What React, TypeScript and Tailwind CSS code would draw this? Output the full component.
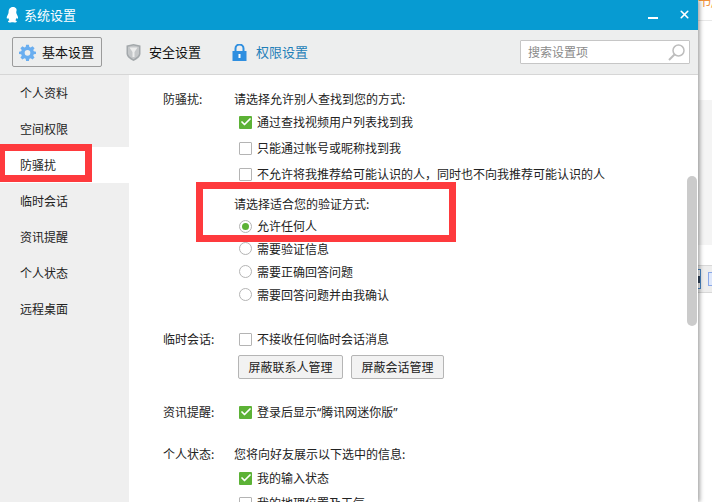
import { Check, X } from 'lucide-react'

const navItems = ['个人资料', '空间权限', '防骚扰', '临时会话', '资讯提醒', '个人状态', '远程桌面']

function Checkbox({ checked }: { checked?: boolean }) {
  if (checked) {
    return (
      <span className="flex h-[13px] w-[13px] shrink-0 items-center justify-center rounded-[1px] bg-[#5cb236]">
        <Check size={12} strokeWidth={3.5} className="text-white" />
      </span>
    )
  }
  return <span className="h-[13px] w-[13px] shrink-0 rounded-[1px] border border-[#b4b4b4] bg-white" />
}

function CheckRow({ checked, label, className }: { checked?: boolean; label: React.ReactNode; className?: string }) {
  return (
    <div className={`flex h-[18px] items-center gap-[5px] pl-[5px] ${className ?? ''}`}>
      <Checkbox checked={checked} />
      <span>{label}</span>
    </div>
  )
}

function RadioRow({ checked, label, className }: { checked?: boolean; label: string; className: string }) {
  return (
    <div className={`flex items-center gap-[5px] pl-[5px] ${className}`}>
      <span className="flex h-[13px] w-[13px] shrink-0 items-center justify-center rounded-full border border-[#b4b4b4] bg-white">
        {checked && <span className="h-[7px] w-[7px] rounded-full bg-[#5cb236]" />}
      </span>
      <span>{label}</span>
    </div>
  )
}

function SectionLabel({ children }: { children: string }) {
  return <div className="w-[71px] shrink-0">{children}</div>
}

function PushButton({ children, width }: { children: string; width: string }) {
  return (
    <button className={`h-[24px] rounded-[2px] border border-[#b5b5b5] bg-[#f2f2f2] text-center text-[12px] ${width}`}>
      {children}
    </button>
  )
}

export default function App() {
  return (
    <div className="relative flex h-[502px] w-[712px] overflow-hidden bg-white font-[family-name:'Noto_Sans_CJK_SC',sans-serif] text-[12px] leading-[18px] text-[#222]">
      <div className="z-10 flex h-full w-[698px] shrink-0 flex-col bg-white shadow-[2px_0_4px_rgba(0,0,0,0.35)]">
        {/* Title bar */}
        <div className="flex h-[30px] shrink-0 items-center bg-[#079bd2] pl-[6px] text-white">
          <svg width="14" height="17" viewBox="0 0 14 17" fill="white">
            <path d="M7 0C3.900 0 2.600 2.400 2.600 5c0 1-.2 1.500-.7 2.400C1 9 .4 10.600.9 11.600c.3.400.9-.2 1.200-.8.2 1 .7 1.800 1.400 2.400-1 .4-1.700.9-1.500 1.600.3.800 2.200.9 3.600.5.3 0 .5-.1.800-.1s.6.100.9.100c1.300.4 3.200.3 3.500-.5.200-.7-.5-1.200-1.500-1.600.7-.6 1.200-1.400 1.400-2.400.3.600.9 1.200 1.200.8.500-1-.1-2.600-1-4.200-.5-.9-.7-1.400-.7-2.400C11.400 2.400 10.100 0 7 0z" />
          </svg>
          <span className="ml-[4px] text-[13px]">系统设置</span>
          <div className="ml-auto flex items-center">
            <span className="mr-[20px] mt-[6px] h-[2px] w-[10px] bg-white" />
            <X size={13} strokeWidth={3} className="mb-[2px] mr-[7px] text-white" />
          </div>
        </div>

        {/* Tab bar */}
        <div className="flex h-[45px] shrink-0 items-center border-b border-[#d6d6d6] bg-[#edeeee] pl-[12px] pr-[8px]">
          <div className="flex h-[30px] w-[90px] items-center rounded-[2px] border border-[#9b9b9b] pl-[6px]">
            <svg width="17" height="17" viewBox="0 0 24 24" fill="#6aaef0" fillRule="evenodd">
              <path d="M10 1h4l.6 3.100 1.900.8L19.100 3 22 5.900l-1.900 2.600.8 1.900L24 11v3l-3.100.6-.8 1.900 1.900 2.600L19.100 22l-2.600-1.900-1.900.8L14 24h-4l-.6-3.100-1.900-.8L4.900 22 2 19.100l1.900-2.600-.8-1.900L0 14v-3l3.100-.6.8-1.900L2 5.900 4.900 3l2.600 1.900 1.900-.8zM12 8.500a4 4 0 1 0 0 8 4 4 0 0 0 0-8z" />
            </svg>
            <span className="ml-[6px] text-[13px] text-[#111]">基本设置</span>
          </div>
          <div className="ml-[24px] flex items-center">
            <svg width="15" height="17" viewBox="0 0 15 17">
              <path d="M0.500 1.500 7.500 0l7 1.500v8c0 3-3 5.500-7 7.500-4-2-7-4.500-7-7.500z" fill="#a3a8ab" />
              <path d="M2 2.700 7.500 1.500l5.500 1.200v6.600c0 2.300-2.300 4.200-5.500 5.900C4.300 13.500 2 11.600 2 9.300z" fill="#c4c7c9" />
              <path d="M3.500 3.500h8L8.500 8v5h-2V8z" fill="#eceded" />
            </svg>
            <span className="ml-[8px] text-[13px] text-[#111]">安全设置</span>
          </div>
          <div className="ml-[31px] flex items-center">
            <svg width="15" height="17" viewBox="0 0 15 17">
              <path d="M3.500 8V4.500a4 4 0 0 1 8 0V8" fill="none" stroke="#2f8fe0" strokeWidth="2" />
              <path d="M0.500 7h14v10h-14z" fill="#2f8fe0" />
              <path d="M6.500 10h2v4h-2z" fill="white" />
            </svg>
            <span className="ml-[9px] text-[13px] text-[#1f7fb8]">权限设置</span>
          </div>
          <div className="ml-auto flex h-[24px] w-[170px] items-center rounded-[1px] border border-[#c6c6c6] bg-white pl-[7px] pr-[4px] text-[#8a8a8a]">
            <span className="text-[12px]">搜索设置项</span>
            <svg width="17" height="17" viewBox="0 0 17 17" fill="none" stroke="#bdbdbd" className="ml-auto">
              <circle cx="10.500" cy="6.500" r="5.500" strokeWidth="1.500" />
              <path d="M6.500 10.500 1 16" strokeWidth="2" />
            </svg>
          </div>
        </div>

        <div className="relative flex min-h-0 flex-1">
          {/* Left nav */}
          <div className="w-[129px] shrink-0 bg-[#efefef]">
            {navItems.map((item, i) => (
              <div key={item} className={`flex h-[36px] items-center pl-[20px] ${i === 2 ? 'bg-white' : ''}`}>
                {item}
              </div>
            ))}
          </div>

          {/* Content */}
          <div className="flex min-w-0 flex-1 flex-col pl-[34px] pt-[15px]">
            <div className="flex">
              <SectionLabel>防骚扰:</SectionLabel>
              <div>
                <div className="h-[18px]">请选择允许别人查找到您的方式:</div>
                <CheckRow checked label="通过查找视频用户列表找到我" className="mt-[5px]" />
                <CheckRow label="只能通过帐号或昵称找到我" className="mt-[8px]" />
                <CheckRow label="不允许将我推荐给可能认识的人，同时也不向我推荐可能认识的人" className="mt-[8px]" />
                <div className="mt-[12px] h-[18px]">请选择适合您的验证方式:</div>
                <div className="mt-[2px]">
                  <RadioRow checked label="允许任何人" className="h-[22px]" />
                  <RadioRow label="需要验证信息" className="h-[23px]" />
                  <RadioRow label="需要正确回答问题" className="h-[23px]" />
                  <RadioRow label="需要回答问题并由我确认" className="h-[23px]" />
                </div>
              </div>
            </div>

            <div className="mt-[24px] flex">
              <SectionLabel>临时会话:</SectionLabel>
              <div>
                <CheckRow label="不接收任何临时会话消息" />
                <div className="mt-[7px] flex gap-[8px] pl-[4px]">
                  <PushButton width="w-[105px]">屏蔽联系人管理</PushButton>
                  <PushButton width="w-[93px]">屏蔽会话管理</PushButton>
                </div>
              </div>
            </div>

            <div className="mt-[24px] flex">
              <SectionLabel>资讯提醒:</SectionLabel>
              <CheckRow
                checked
                label={
                  <>
                    登录后显示<span className="font-['Noto_Sans']">“</span>腾讯网迷你版<span className="font-['Noto_Sans']">”</span>
                  </>
                }
              />
            </div>

            <div className="mt-[24px] flex">
              <SectionLabel>个人状态:</SectionLabel>
              <div>
                <div className="h-[18px]">您将向好友展示以下选中的信息:</div>
                <CheckRow checked label="我的输入状态" className="mt-[6px]" />
                <CheckRow label="我的地理位置及天气" className="mt-[7px]" />
              </div>
            </div>
          </div>

          {/* Scrollbar thumb */}
          <div className="absolute right-[1px] top-[101px] h-[150px] w-[10px] rounded-[5px] bg-[#cbcbcb]" />

          {/* Red annotations */}
          <div className="absolute left-[-2px] top-[69px] h-[38px] w-[94px] border-[7px] border-[#fe3a3d]" />
          <div className="absolute left-[196px] top-[107px] h-[60px] w-[260px] border-[7px] border-[#fe3a3d]" />
        </div>
      </div>

      {/* Desktop behind the window */}
      <div className="relative flex min-w-0 flex-1 flex-col overflow-hidden">
        <span className="absolute left-[0px] top-[-9px] whitespace-nowrap text-[13px] text-[#f0923c]">书/</span>
        <div className="h-[21px] shrink-0 border-b border-[#e8e8e8]" />
        <div className="h-[79px] shrink-0" />
        <div className="h-[145px] shrink-0 bg-[#f4f4f4]" />
        <div className="h-[20px] shrink-0" />
        <div className="flex h-[28px] shrink-0 items-center border-y border-[#d8d8d8] bg-[#eeeeee]">
          <div className="flex h-[20px] w-[5px] items-center justify-end border-y border-r border-[#4a86c5] bg-[#f7f7f7]">
            <span className="h-[7px] w-[2px] bg-[#33455c]" />
          </div>
          <div className="ml-[7px] h-[14px] w-[4px] shrink-0 border-y border-l border-[#8aa8e8] bg-[#dfe8fb]" />
        </div>
      </div>
    </div>
  )
}
